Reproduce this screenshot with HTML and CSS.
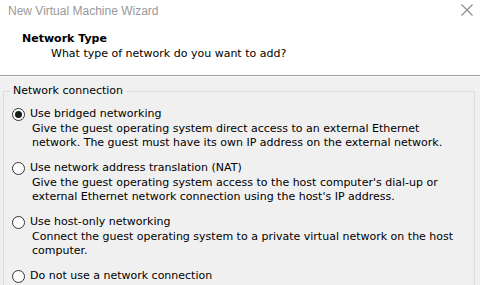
FILE: index.html
```html
<!DOCTYPE html>
<html>
<head>
    <meta charset="utf-8">
    <title>New Virtual Machine Wizard</title>
    <link rel="stylesheet" href="styles.css">
</head>
<body>
    <div class="titlebar">
        <div class="title">New Virtual Machine Wizard</div>
        <svg class="close" width="12" height="12" viewBox="0 0 12 12">
            <path d="M0.5 0.5 L11.5 11.5 M11.5 0.5 L0.5 11.5" stroke="#8a8a8a" stroke-width="1.1" fill="none"/>
        </svg>
    </div>
    <div class="header">
        <div class="page-title">Network Type</div>
        <div class="page-sub">What type of network do you want to add?</div>
    </div>
    <div class="main">
        <div class="group">
            <div class="legend">Network connection</div>

            <div class="option">
                <div class="radio-row"><span class="radio checked"></span>Use bridged networking</div>
                <div class="desc">Give the guest operating system direct access to an external Ethernet<br>network. The guest must have its own IP address on the external network.</div>
            </div>

            <div class="option">
                <div class="radio-row"><span class="radio"></span>Use network address translation (NAT)</div>
                <div class="desc">Give the guest operating system access to the host computer's dial-up or<br>external Ethernet network connection using the host's IP address.</div>
            </div>

            <div class="option">
                <div class="radio-row"><span class="radio"></span>Use host-only networking</div>
                <div class="desc">Connect the guest operating system to a private virtual network on the host<br>computer.</div>
            </div>

            <div class="option">
                <div class="radio-row"><span class="radio"></span>Do not use a network connection</div>
            </div>
        </div>
    </div>
</body>
</html>
```

FILE: styles.css
```css
html,
body {
    margin: 0;
    height: 100%;
    overflow: hidden;
}
body {
    font-family: "DejaVu Sans", "Liberation Sans", sans-serif;
    font-size: 11px;
    color: #000;
    background: #f0f0f0;
}
.titlebar {
    background: #fff;
    height: 22px;
    display: flex;
    justify-content: space-between;
    align-items: center;
    padding: 0 7px 0 8px;
}
.title {
    color: #999;
    font-size: 12px;
    font-family: "Liberation Sans", sans-serif;
    margin-top: -1px;
}
.close {
    margin-top: -2px;
}
.header {
    background: #fff;
    height: 54px;
    padding: 10px 0 0 0;
    box-sizing: border-box;
    border-bottom: 1px solid #a0a0a0;
    box-shadow: 0 1px 0 #fff;
}
.page-title {
    font-weight: bold;
    padding-left: 22px;
    line-height: 14px;
}
.page-sub {
    padding-left: 51px;
    line-height: 14px;
    margin-top: 1px;
}
.main {
    padding: 15px 5px 0 3px;
}
.group {
    position: relative;
    border: 1px solid #dcdcdc;
    height: 230px;
    padding: 15px 0 0 8px;
}
.legend {
    position: absolute;
    top: -8px;
    left: 6px;
    padding: 0 3px;
    background: #f0f0f0;
    line-height: 14px;
}
.option {
    margin-bottom: 11px;
}
.radio-row {
    display: flex;
    align-items: center;
    line-height: 14px;
}
.radio {
    width: 11px;
    height: 11px;
    border: 1px solid #333;
    border-radius: 50%;
    background: #fff;
    margin-right: 5px;
    position: relative;
}
.radio.checked::after {
    content: "";
    position: absolute;
    top: 2px;
    left: 2px;
    width: 7px;
    height: 7px;
    border-radius: 50%;
    background: #1a1a1a;
}
.desc {
    padding-left: 20px;
    line-height: 14px;
    margin-top: 1px;
}
```
